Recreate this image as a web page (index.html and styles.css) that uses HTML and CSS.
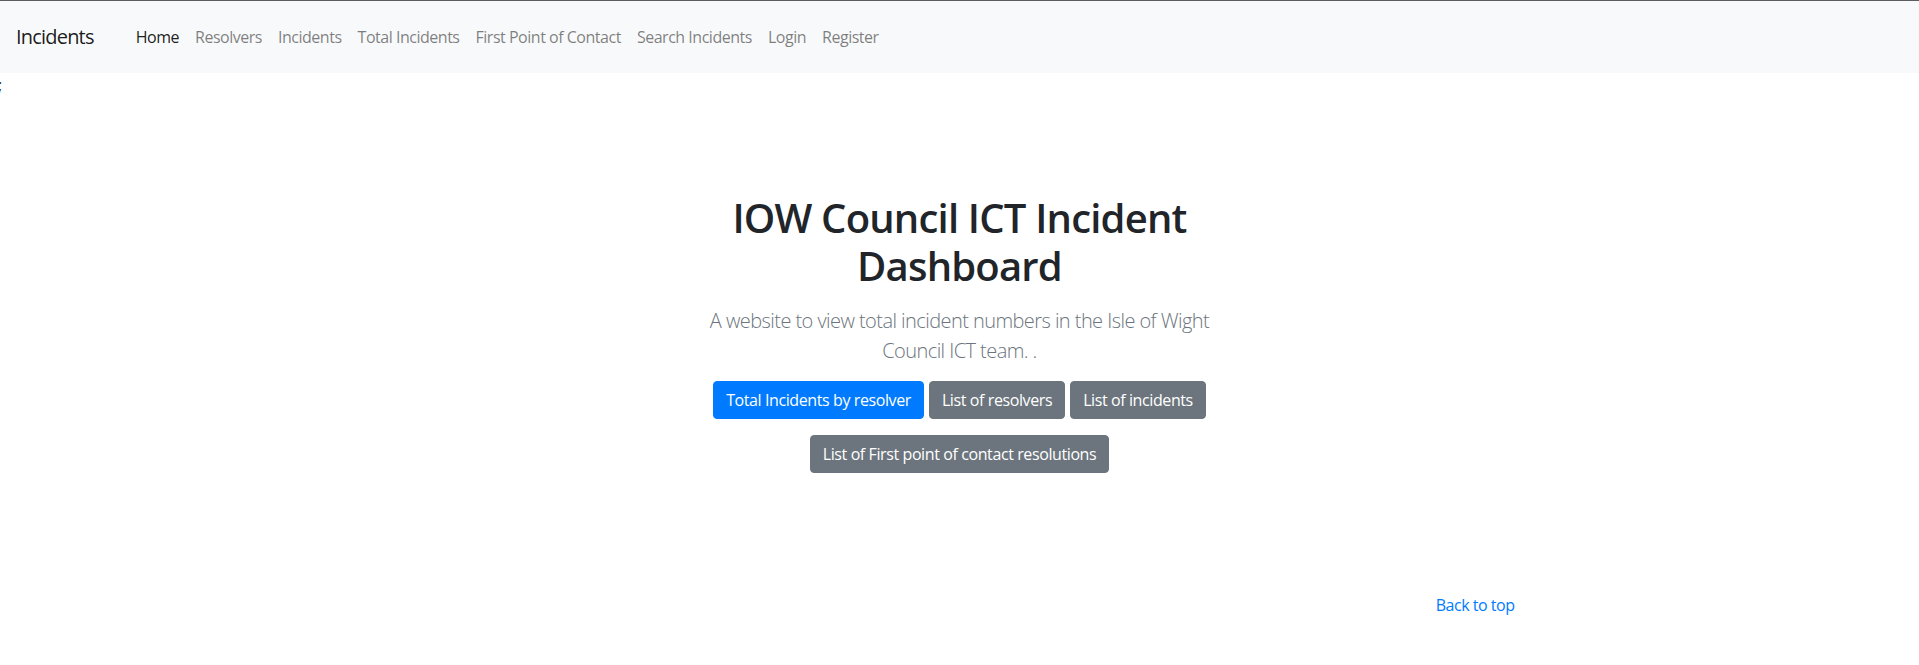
FILE: index.html
```html
<!DOCTYPE html>
<html lang="en">
<head>
<meta charset="utf-8">
<title>Incidents</title>
<link rel="stylesheet" href="styles.css">
</head>
<body>
<nav class="navbar">
  <a class="brand" href="#">Incidents</a>
  <ul class="nav">
    <li><a class="nav-link active" href="#">Home</a></li>
    <li><a class="nav-link" href="#">Resolvers</a></li>
    <li><a class="nav-link" href="#">Incidents</a></li>
    <li><a class="nav-link" href="#">Total Incidents</a></li>
    <li><a class="nav-link" href="#">First Point of Contact</a></li>
    <li><a class="nav-link" href="#">Search Incidents</a></li>
    <li><a class="nav-link" href="#">Login</a></li>
    <li><a class="nav-link" href="#">Register</a></li>
  </ul>
</nav>
<div class="stray"><span class="semi">;</span></div>
<main class="hero">
  <h1 class="title">IOW Council ICT Incident Dashboard</h1>
  <p class="lead">A website to view total incident numbers in the Isle of Wight Council ICT team. .</p>
  <div class="actions">
    <a class="btn btn-primary" href="#">Total Incidents by resolver</a>
    <a class="btn btn-secondary" href="#">List of resolvers</a>
    <a class="btn btn-secondary" href="#">List of incidents</a>
    <a class="btn btn-secondary" href="#">List of First point of contact resolutions</a>
  </div>
</main>
<footer class="footer">
  <a class="back" href="#">Back to top</a>
</footer>
</body>
</html>
```
FILE: styles.css
```css
* { box-sizing: border-box; }
html, body { margin: 0; padding: 0; }
body {
  font-family: "Open Sans", "Noto Sans", sans-serif;
  font-size: 16px;
  line-height: 24px;
  color: #212529;
  background: #fff;
  border-top: 1px solid #5c5c5c;
}
a { text-decoration: none; }

.navbar {
  display: flex;
  align-items: center;
  background: #f8f9fa;
  padding: 16px 16px;
  height: 72px;
}
.brand {
  font-size: 20px;
  line-height: 30px;
  padding: 5px 0;
  color: rgba(0,0,0,0.9);
  letter-spacing: -0.04em;
  margin-right: 34px;
}
.nav {
  display: flex;
  list-style: none;
  margin: 0;
  padding: 0;
}
.nav-link {
  display: block;
  padding: 8px 8px;
  color: rgba(0,0,0,0.5);
  letter-spacing: -0.03em;
}
.nav-link.active { color: rgba(0,0,0,0.9); }

.stray { height: 24px; line-height: 24px; }
.semi { margin-left: -2px; color: #212529; }

.hero {
  width: 570px;
  margin: 0 auto;
  padding: 97px 15px 0;
  text-align: center;
}
.title {
  margin: 0 0 16px;
  font-size: 40px;
  line-height: 48px;
  font-weight: 600;
  letter-spacing: -0.02em;
  color: #212529;
}
.lead {
  margin: 0 0 15px;
  font-size: 20px;
  line-height: 30px;
  font-weight: 300;
  color: #6c757d;
  letter-spacing: -0.028em;
}
.actions {
  display: flex;
  flex-wrap: wrap;
  justify-content: center;
  column-gap: 5px;
  row-gap: 16px;
}
.btn {
  display: inline-block;
  padding: 6px 12px;
  font-size: 16px;
  line-height: 24px;
  border: 1px solid transparent;
  border-radius: 4px;
  color: #fff;
  letter-spacing: -0.025em;
}
.btn-primary { background: #007bff; border-color: #007bff; }
.btn-secondary { background: #6c757d; border-color: #6c757d; }

.footer {
  max-width: 1140px;
  margin: 0 auto;
  padding: 120px 15px 0;
  text-align: right;
}
.back {
  color: #007bff;
  letter-spacing: -0.03em;
}
```
